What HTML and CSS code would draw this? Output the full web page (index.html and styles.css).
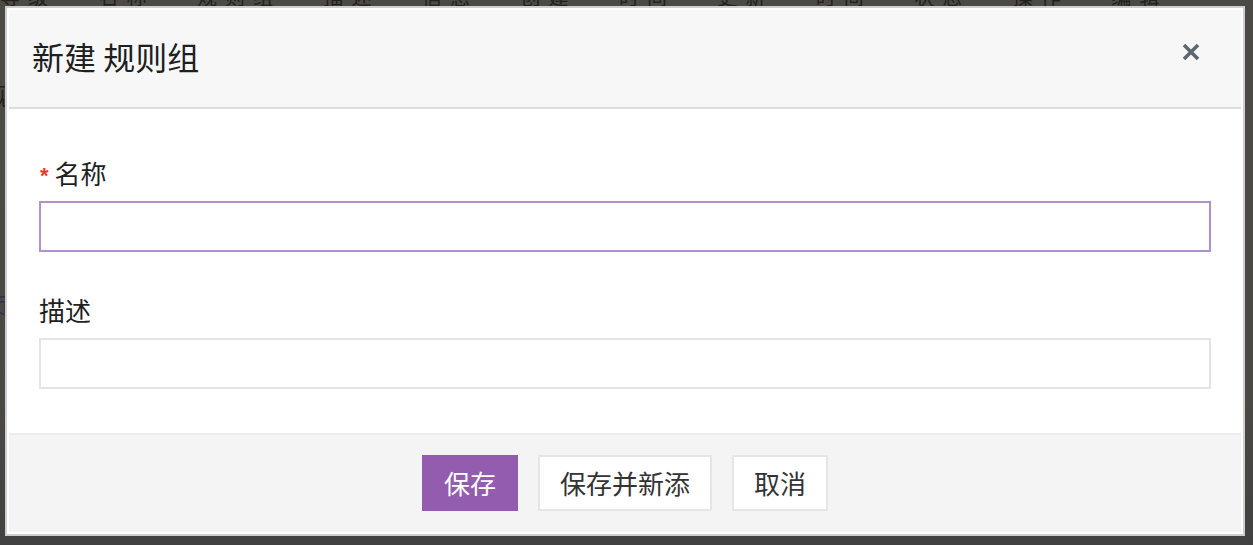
FILE: index.html
```html
<!DOCTYPE html>
<html lang="zh">
<head>
<meta charset="utf-8">
<title>新建 规则组</title>
<link rel="stylesheet" href="styles.css">
</head>
<body>
<div class="page">
  <div class="page-top">等级 名称 规则组 描述 信息 创建 时间 更新 时间 状态 操作 编辑</div>
  <div class="page-row">规</div>
  <div class="page-row">0</div>
  <div class="page-row purple">页</div>
</div>
<div class="modal">
  <div class="modal-header">
    <h1 class="modal-title">新建 规则组</h1>
    <button class="close" aria-label="关闭">
      <svg width="18" height="18" viewBox="0 0 18 18"><path d="M2 2 L16 16 M16 2 L2 16" stroke="#5d6770" stroke-width="3.6" stroke-linecap="butt"/></svg>
    </button>
  </div>
  <div class="modal-body">
    <div class="field">
      <label class="label"><span class="req">*</span>名称</label>
      <input class="input input-focus" type="text">
    </div>
    <div class="field">
      <label class="label">描述</label>
      <input class="input" type="text">
    </div>
  </div>
  <div class="modal-footer">
    <button class="btn btn-primary">保存</button>
    <button class="btn">保存并新添</button>
    <button class="btn">取消</button>
  </div>
</div>
</body>
</html>
```
FILE: styles.css
```css
html, body {
  margin: 0;
  padding: 0;
  width: 1253px;
  height: 545px;
  overflow: hidden;
  background-color: #474641;
  font-family: "Noto Sans CJK SC", "Noto Sans", sans-serif;
}
.page {
  width: 1253px;
  height: 545px;
  overflow: hidden;
  background-color: #4a4944;
  background-image: linear-gradient(#4b4a45 0, #4a4944 400px, #414141 545px);
  color: #1e1d1a;
}
.page-top {
  font-size: 20px;
  line-height: 20px;
  margin-top: -13px;
  white-space: nowrap;
  word-spacing: 30px;
  letter-spacing: 8px;
  color: #22211d;
}
.page-row {
  font-size: 24px;
  margin-left: -14px;
  margin-top: 70px;
  color: #22211d;
}
.page-row.purple { color: #3a2d55; }
.modal {
  position: absolute;
  left: 5px;
  top: 6px;
  width: 1232px;
  height: 522px;
  border: 2px solid #cfcfcf;
  padding: 2px;
  background: #fff;
  display: flex;
  flex-direction: column;
}
.modal-header {
  height: 97px;
  background: #f7f7f7;
  border-bottom: 2px solid #dedede;
  display: flex;
  align-items: center;
  justify-content: space-between;
  padding: 0 41px 0 23px;
}
.modal-title {
  margin: 0 0 6px 0;
  font-size: 32px;
  font-weight: 400;
  color: #1f1f1f;
  line-height: 40px;
}
.close {
  background: none;
  border: 0;
  padding: 0;
  width: 18px;
  height: 18px;
  display: flex;
  margin-bottom: 13px;
}
.modal-body {
  flex: 1;
  padding: 46px 30px 0 30px;
}
.field {
  display: flex;
  flex-direction: column;
  gap: 10px;
  margin-bottom: 40px;
}
.label {
  font-size: 26px;
  line-height: 36px;
  height: 36px;
  color: #1f1f1f;
  display: flex;
  align-items: center;
}
.req {
  color: #ee3a2c;
  font-size: 22px;
  font-weight: 700;
  line-height: 20px;
  margin: 6px 6px 0 1px;
  font-family: "Liberation Sans", sans-serif;
}
.input {
  box-sizing: border-box;
  height: 51px;
  width: 100%;
  border: 2px solid #e4e4e4;
  background: #fff;
  margin: 0;
  padding: 0 12px;
  font: inherit;
  outline: none;
}
.input-focus { border-color: #b390c9; }
.modal-footer {
  height: 99px;
  box-sizing: border-box;
  background: #f4f4f4;
  border-top: 2px solid #ececec;
  display: flex;
  justify-content: center;
  align-items: flex-start;
  gap: 20px;
  padding-top: 20px;
}
.btn {
  height: 56px;
  padding: 0 20px;
  border: 2px solid #e6e6e6;
  background: #fff;
  color: #333;
  font-family: inherit;
  font-size: 26px;
  line-height: 52px;
  cursor: pointer;
}
.btn-primary {
  background: #935caf;
  border-color: #935caf;
  color: #fff;
}
```
